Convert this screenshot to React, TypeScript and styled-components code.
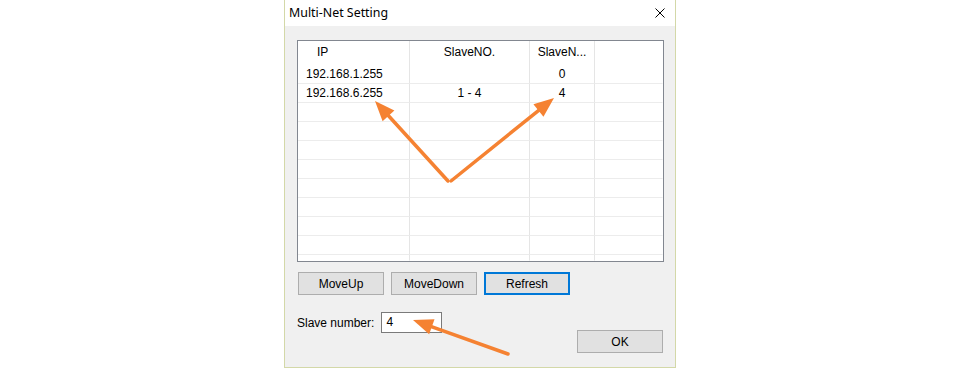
import React from "react";
import styled, { createGlobalStyle } from "styled-components";

const Global = createGlobalStyle`
  html, body { margin: 0; padding: 0; background: #ffffff; }
  body { font-family: "Liberation Sans", Arial, sans-serif; }
  * { box-sizing: border-box; }
`;

const Page = styled.div`
  position: relative;
  width: 960px;
  height: 368px;
  display: flex;
  justify-content: center;
  overflow: hidden;
`;

const Window = styled.div`
  width: 392px;
  height: 368px;
  display: flex;
  flex-direction: column;
  border-left: 1px solid #d3d8a8;
  border-right: 1px solid #d3d8a8;
  border-bottom: 1px solid #d3d8a8;
  background: #f0f0f0;
`;

const TitleBar = styled.div`
  height: 26px;
  background: #ffffff;
  display: flex;
  align-items: center;
  justify-content: space-between;
  padding: 0 8px 1px 4px;
`;

const Title = styled.span`
  font-family: "Noto Sans", "Liberation Sans", sans-serif;
  font-size: 12.4px;
  color: #000;
`;

const Close = styled.svg`
  width: 10px;
  height: 10px;
  margin-right: 2px;
`;

const Client = styled.div`
  flex: 1;
  display: flex;
  flex-direction: column;
  padding: 14px 11px 0 12px;
`;

const ListBox = styled.div`
  width: 367px;
  height: 222px;
  border: 1px solid #828790;
  background: #ffffff;
  display: grid;
  grid-template-columns: 112px 120px 65px 68px;
  grid-template-rows: 24px repeat(10, 19px) 1fr;
`;

const HeadCell = styled.div<{ $align: "left" | "center"; $last?: boolean }>`
  border-right: 1px solid ${(p) => (p.$last ? "transparent" : "#e5e5e5")};
  display: flex;
  align-items: center;
  justify-content: ${(p) => (p.$align === "left" ? "flex-start" : "center")};
  padding: 0 0 3px ${(p) => (p.$align === "left" ? "19px" : "0")};
  font-size: 12px;
  color: #000;
  white-space: nowrap;
`;

const Cell = styled.div<{ $align: "left" | "center"; $last?: boolean; $filler?: boolean }>`
  border-right: 1px solid ${(p) => (p.$last ? "transparent" : "#e5e5e5")};
  border-bottom: 1px solid ${(p) => (p.$filler ? "transparent" : "#ececec")};
  display: flex;
  align-items: center;
  justify-content: ${(p) => (p.$align === "left" ? "flex-start" : "center")};
  padding-left: ${(p) => (p.$align === "left" ? "8px" : "0")};
  font-size: 12px;
  line-height: 18px;
  color: #000;
  white-space: nowrap;
`;

const ButtonRow = styled.div`
  display: flex;
  gap: 7px;
  margin-top: 10px;
  padding-left: 1px;
`;

const Button = styled.button<{ $focused?: boolean }>`
  width: 86px;
  height: 23px;
  margin: 0;
  padding: 0;
  font-family: "Liberation Sans", Arial, sans-serif;
  font-size: 12px;
  color: #000;
  background: #e1e1e1;
  border: ${(p) => (p.$focused ? "2px solid #0078d7" : "1px solid #adadad")};
  border-radius: 0;
`;

const BottomRow = styled.div`
  display: flex;
  justify-content: space-between;
  align-items: flex-start;
  margin-top: 17px;
`;

const Field = styled.label`
  display: flex;
  align-items: center;
  gap: 7px;
  font-size: 12px;
  color: #000;
`;

const Input = styled.div`
  width: 61px;
  height: 21px;
  background: #fff;
  border: 1px solid #7a7a7a;
  font-size: 12px;
  line-height: 19px;
  padding-left: 4px;
  color: #000;
`;

const OkButton = styled(Button)`
  margin-top: 18px;
  margin-right: 1px;
`;

const Overlay = styled.svg`
  position: absolute;
  left: 0;
  top: 0;
  width: 960px;
  height: 368px;
  pointer-events: none;
`;

function Arrow({ x1, y1, x2, y2 }: { x1: number; y1: number; x2: number; y2: number }) {
  const dx = x2 - x1;
  const dy = y2 - y1;
  const len = Math.hypot(dx, dy);
  const ux = dx / len;
  const uy = dy / len;
  const hl = 20;
  const hw = 8;
  const bx = x2 - ux * hl;
  const by = y2 - uy * hl;
  const px = -uy * hw;
  const py = ux * hw;
  return (
    <g>
      <line x1={x1} y1={y1} x2={bx + ux * 2} y2={by + uy * 2} stroke="#f58232" strokeWidth={3.5} strokeLinecap="round" />
      <polygon points={`${x2},${y2} ${bx + px},${by + py} ${bx - px},${by - py}`} fill="#f58232" />
    </g>
  );
}

const columns: { title: string; align: "left" | "center" }[] = [
  { title: "IP", align: "left" },
  { title: "SlaveNO.", align: "center" },
  { title: "SlaveN...", align: "center" },
  { title: "", align: "center" },
];

const rows: string[][] = [
  ["192.168.1.255", "", "0", ""],
  ["192.168.6.255", "1 - 4", "4", ""],
];

export default function App() {
  const allRows = Array.from({ length: 10 }, (_, i) => rows[i] ?? ["", "", "", ""]);
  return (
    <Page>
      <Global />
      <Window>
        <TitleBar>
          <Title>Multi-Net Setting</Title>
          <Close viewBox="0 0 10 10">
            <path d="M0.5 0.5 L9.5 9.5 M9.5 0.5 L0.5 9.5" stroke="#000" strokeWidth="1" fill="none" />
          </Close>
        </TitleBar>
        <Client>
          <ListBox>
            {columns.map((c, i) => (
              <HeadCell key={"h" + i} $align={c.align} $last={i === 3}>
                {c.title}
              </HeadCell>
            ))}
            {allRows.map((r, ri) =>
              r.map((v, ci) => (
                <Cell key={ri + "-" + ci} $align={columns[ci].align} $last={ci === 3}>
                  {v}
                </Cell>
              ))
            )}
            {columns.map((c, i) => (
              <Cell key={"f" + i} $align={c.align} $last={i === 3} $filler />
            ))}
          </ListBox>
          <ButtonRow>
            <Button>MoveUp</Button>
            <Button>MoveDown</Button>
            <Button $focused>Refresh</Button>
          </ButtonRow>
          <BottomRow>
            <Field>
              Slave number:
              <Input>4</Input>
            </Field>
            <OkButton>OK</OkButton>
          </BottomRow>
        </Client>
      </Window>
      <Overlay viewBox="0 0 960 368">
        <Arrow x1={448} y1={181} x2={375} y2={101} />
        <Arrow x1={451} y1={181} x2={554} y2={98} />
        <Arrow x1={508} y1={354} x2={413} y2={320} />
      </Overlay>
    </Page>
  );
}
